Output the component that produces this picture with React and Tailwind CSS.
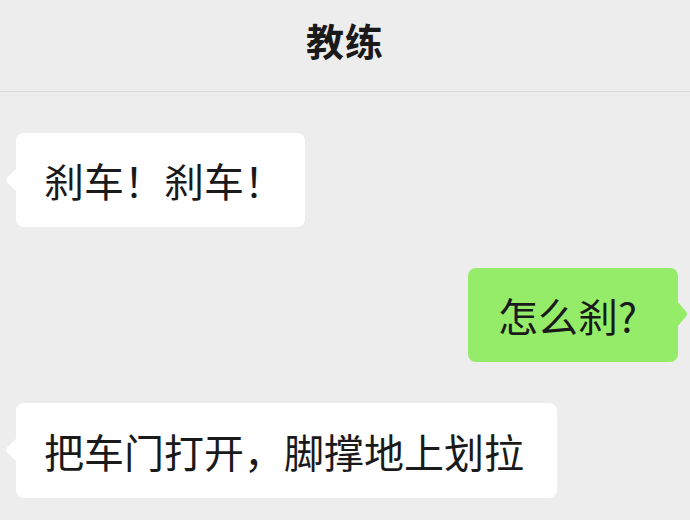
import React from "react";

const font = { fontFamily: '"Noto Sans CJK SC", "Noto Sans", sans-serif' };

function LeftTail({ color }) {
  return (
    <svg className="absolute left-[-11px] top-[35px]" width="12" height="24" viewBox="0 0 12 24">
      <path d="M12 0 L2.2 9.6 Q0 12 2.2 14.4 L12 24 Z" fill={color} />
    </svg>
  );
}

function RightTail({ color }) {
  return (
    <svg className="absolute right-[-10px] top-[33px]" width="11" height="26" viewBox="0 0 11 26">
      <path d="M0 0 L9 10.6 Q11 13 9 15.4 L0 26 Z" fill={color} />
    </svg>
  );
}

export default function App() {
  return (
    <div
      className="w-[690px] h-[520px] bg-[#ededed] overflow-hidden flex flex-col text-[#1a1a1a]"
      style={font}
    >
      <div className="h-[92px] shrink-0 border-b border-[#d9d9d9] flex items-center justify-center pb-[11px]">
        <span className="text-[38px] font-bold leading-none tracking-[1px]">教练</span>
      </div>
      <div className="flex flex-col gap-[41px] pt-[41px]">
        <div className="flex pl-[16px]">
          <div className="relative w-[289px] h-[94px] bg-white rounded-[8px] flex items-center pl-[28px]">
            <LeftTail color="#ffffff" />
            <span className="text-[40px] leading-none">刹车！刹车！</span>
          </div>
        </div>
        <div className="flex justify-end pr-[12px]">
          <div className="relative w-[210px] h-[94px] bg-[#95ec69] rounded-[8px] flex items-center pl-[30px]">
            <RightTail color="#95ec69" />
            <span className="text-[40px] leading-none">怎么刹?</span>
          </div>
        </div>
        <div className="flex pl-[16px]">
          <div className="relative w-[541px] h-[95px] bg-white rounded-[8px] flex items-center pl-[28px]">
            <LeftTail color="#ffffff" />
            <span className="text-[40px] leading-none">把车门打开，脚撑地上划拉</span>
          </div>
        </div>
      </div>
    </div>
  );
}
